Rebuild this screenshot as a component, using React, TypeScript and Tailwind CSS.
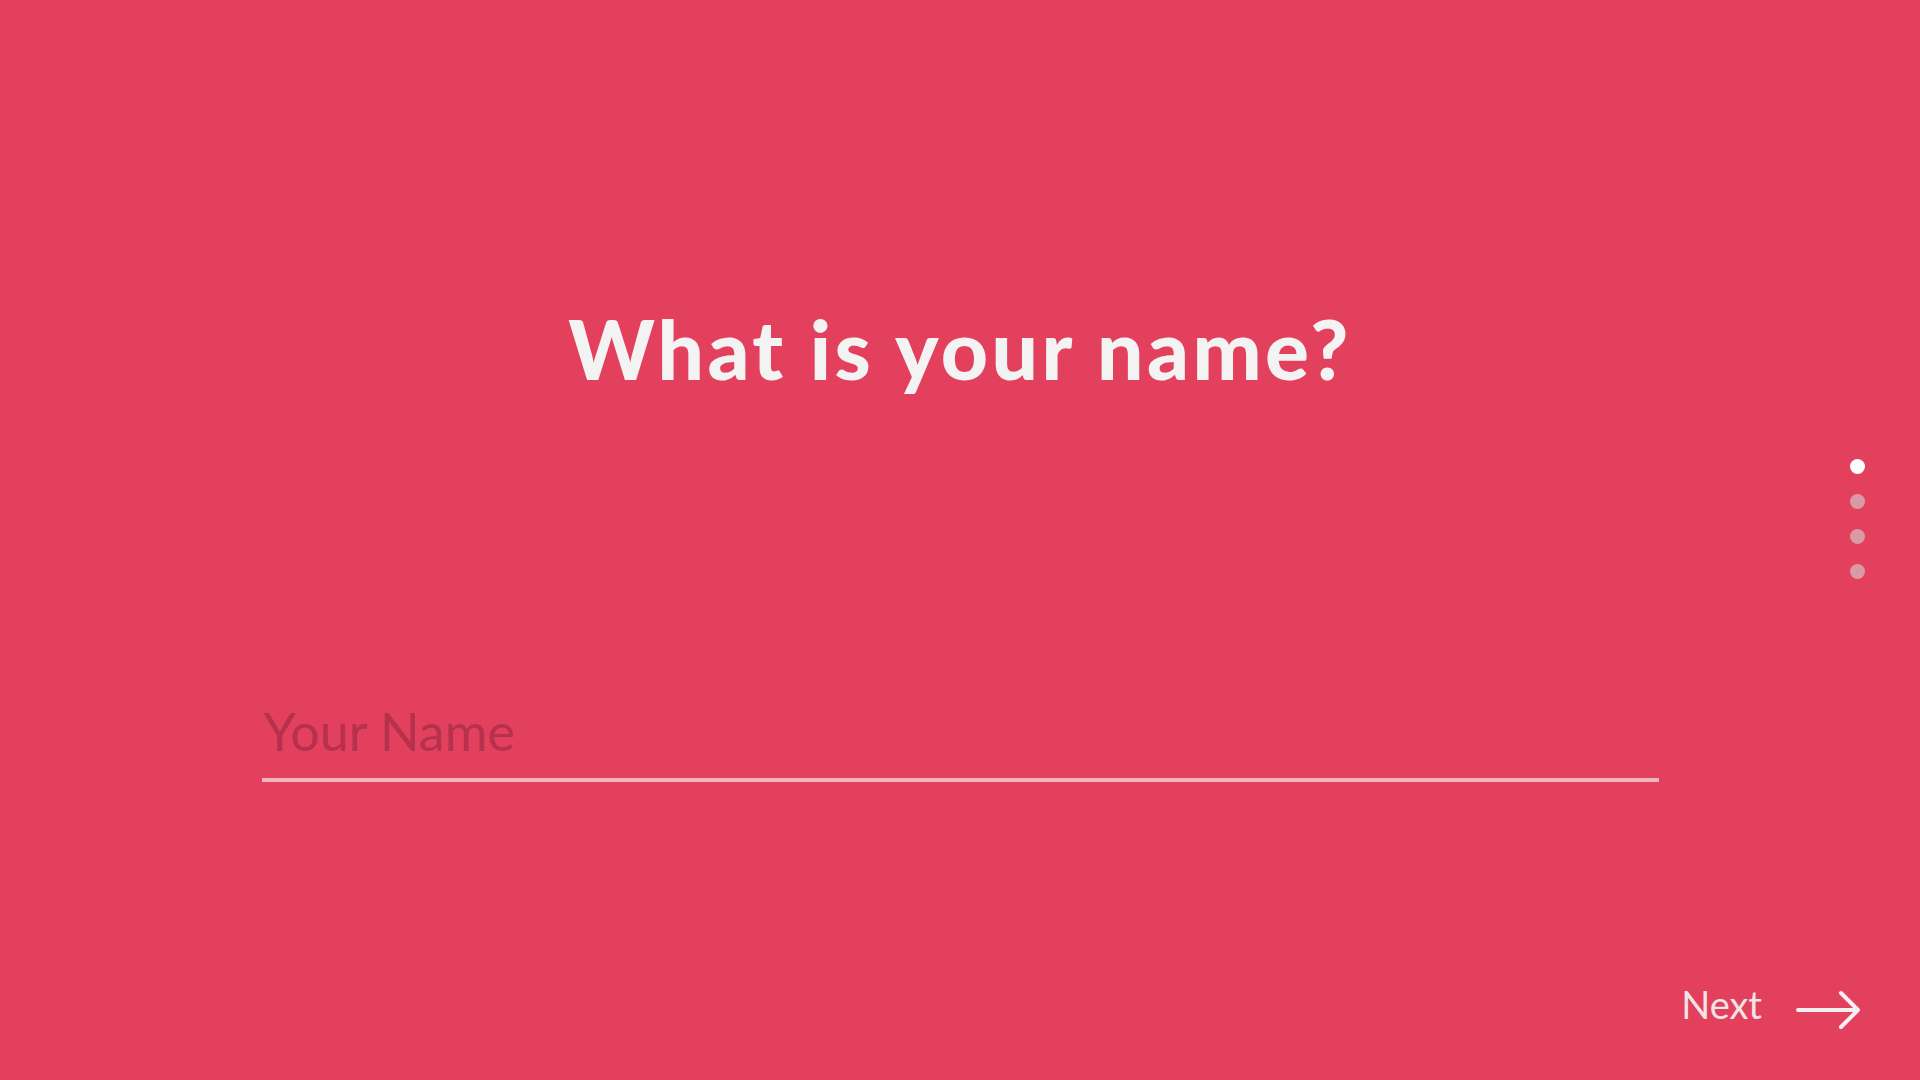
import { useState } from 'react'

const STEPS = [0, 1, 2, 3]

export default function App() {
  const [name, setName] = useState('')
  const active = 0

  return (
    <div
      className="relative h-screen w-full overflow-hidden bg-[#e2405c]"
      style={{ fontFamily: 'Lato, "Noto Sans", sans-serif' }}
    >
      {/* Question */}
      <div className="flex flex-col items-center pt-[307px]">
        <h1 className="text-[82px] font-black leading-none tracking-[0.042em] text-[#f4f3f3]">
          What is your name?
        </h1>

        {/* Answer */}
        <div className="mt-[311px] w-[1397px]">
          <input
            type="text"
            value={name}
            onChange={(e) => setName(e.target.value)}
            placeholder="Your Name"
            className="w-full border-b-4 border-[#efb4be] bg-transparent pb-[16px] pl-[2px] text-[52px] leading-none text-white placeholder:text-[#b5314d] focus:outline-none"
          />
        </div>
      </div>

      {/* Step dots */}
      <div className="absolute right-[55px] top-[459px] flex flex-col gap-[20px]">
        {STEPS.map((i) => (
          <span
            key={i}
            className={`h-[15px] w-[15px] rounded-full ${
              i === active ? 'bg-white' : 'bg-[#d99aa6]'
            }`}
          />
        ))}
      </div>

      {/* Next */}
      <button className="absolute bottom-[50px] right-[58px] flex items-center gap-[34px] text-[38px] font-normal leading-none text-[#f1e4e7]">
        <span className="-translate-y-[6px]">Next</span>
        <svg width="66" height="40" viewBox="0 0 66 40" fill="none">
          <path
            d="M2 20 H62 M45 3 L62 20 L45 37"
            stroke="#f6eef0"
            strokeWidth="4"
            strokeLinecap="round"
            strokeLinejoin="round"
          />
        </svg>
      </button>
    </div>
  )
}
